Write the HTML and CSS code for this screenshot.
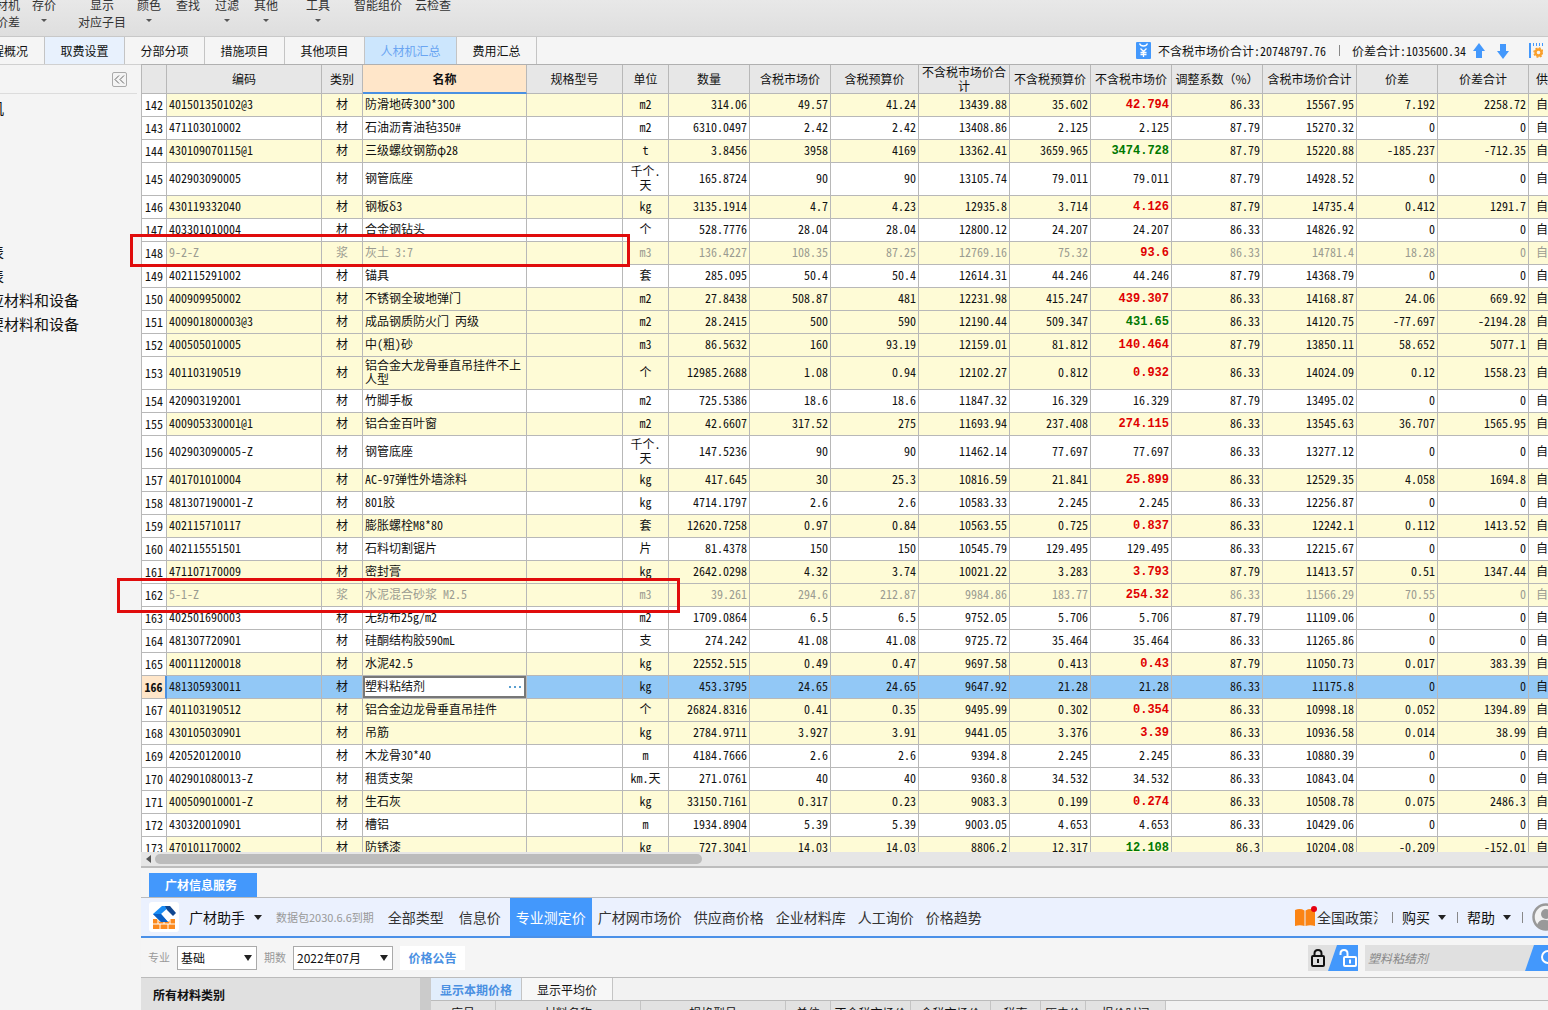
FILE: index.html
```html
<!DOCTYPE html>
<html lang="zh-CN">
<head>
<meta charset="utf-8">
<title>人材机汇总</title>
<link rel="stylesheet" href="styles.css">
</head>
<body>
<header class="toolbar">
  <div class="tools tools-cut"><button>材机<br>价差</button></div>
  <div class="tools"><button>存价<i class="caret"></i></button></div>
  <div class="tools">
    <button class="wide">显示<br>对应子目</button>
    <button>颜色<i class="caret"></i></button>
    <button>查找</button>
    <button>过滤<i class="caret"></i></button>
    <button>其他<i class="caret"></i></button>
  </div>
  <div class="tools"><button>工具<i class="caret"></i></button></div>
  <div class="tools"><button class="wide">智能组价</button><button class="wide">云检查</button></div>
</header>
<nav class="tabs">
  <button class="tab first">程概况</button>
  <button class="tab hover">取费设置</button>
  <button class="tab">分部分项</button>
  <button class="tab">措施项目</button>
  <button class="tab">其他项目</button>
  <button class="tab active">人材机汇总</button>
  <button class="tab">费用汇总</button>
  <div class="totals">
    <svg class="yuan" width="15" height="17" viewBox="0 0 15 17"><rect width="15" height="17" rx="1" fill="#4398fc"/><path d="M3.500 1.500Q4.500 4 7.500 4T11.500 1.500M4.500 6.500L7.500 9.500 10.500 6.500M7.500 9.500V15M4.500 10.500H10.500M4.500 12.500H10.500" fill="none" stroke="#fff" stroke-width="1.300"/></svg>
    <span>不含税市场价合计:20748797.76</span>
    <i class="bar"></i>
    <span>价差合计:1035600.34</span>
    <svg class="arrow" width="12" height="16" viewBox="0 0 12 16"><path d="M6 0L12 8H9V15H3V8H0Z" fill="#4398fc"/></svg>
    <svg class="arrow-down" width="12" height="16" viewBox="0 0 12 16"><path d="M6 16L12 8H9V1H3V8H0Z" fill="#4398fc"/></svg>
    <svg class="settings" width="14" height="16" viewBox="0 0 14 16"><path d="M1 0V15" stroke="#4398fc" stroke-width="2"/><path d="M4.500 0V3M7.500 0V3M10.500 0V3M13.500 0V3" stroke="#4398fc"/><circle cx="9.500" cy="9.500" r="3" fill="none" stroke="#f9a02c" stroke-width="2.400"/><circle cx="9.500" cy="9.500" r="4.500" fill="none" stroke="#f9a02c" stroke-width="1.400" stroke-dasharray="2 1.500"/></svg>
  </div>
</nav>
<div class="workspace">
  <aside class="sidebar">
    <div class="side-head"><button class="collapse" aria-label="收起"><svg width="11" height="9" viewBox="0 0 11 9"><path d="M5 .5L1 4.500 5 8.500M10 .5L6 4.500 10 8.500" fill="none" stroke="#666"/></svg></button></div>
    <ul class="side-list"><li class="lead">机</li><li>表</li><li>表</li><li>应材料和设备</li><li>要材料和设备</li></ul>
  </aside>
  <main class="main">
    <div class="grid">
<table class="data">
<colgroup><col class="c25"><col class="c155"><col class="c41"><col class="c164"><col class="c96"><col class="c46"><col class="c81"><col class="c81"><col class="c88"><col class="c91"><col class="c81"><col class="c81"><col class="c91"><col class="c94"><col class="c81"><col class="c91"><col class="c81"></colgroup>
<thead><tr><th></th><th>编码</th><th>类别</th><th class="sorted">名称</th><th>规格型号</th><th>单位</th><th>数量</th><th>含税市场价</th><th>含税预算价</th><th>不含税市场价合计</th><th>不含税预算价</th><th>不含税市场价</th><th>调整系数（%）</th><th>含税市场价合计</th><th>价差</th><th>价差合计</th><th>供</th></tr></thead>
<tbody>
<tr class="y"><td>142<td>401501350102@3<td>材<td>防滑地砖300*300<td><td>m2<td>314.06<td>49.57<td>41.24<td>13439.88<td>35.602<td class="up">42.794<td>86.33<td>15567.95<td>7.192<td>2258.72<td>自
<tr><td>143<td>471103010002<td>材<td>石油沥青油毡350#<td><td>m2<td>6310.0497<td>2.42<td>2.42<td>13408.86<td>2.125<td>2.125<td>87.79<td>15270.32<td>0<td>0<td>自
<tr class="y"><td>144<td>430109070115@1<td>材<td>三级螺纹钢筋φ28<td><td>t<td>3.8456<td>3958<td>4169<td>13362.41<td>3659.965<td class="down">3474.728<td>87.79<td>15220.88<td>-185.237<td>-712.35<td>自
<tr class="tall"><td>145<td>402903090005<td>材<td>钢管底座<td><td>千个.天<td>165.8724<td>90<td>90<td>13105.74<td>79.011<td>79.011<td>87.79<td>14928.52<td>0<td>0<td>自
<tr class="y"><td>146<td>430119332040<td>材<td>钢板δ3<td><td>kg<td>3135.1914<td>4.7<td>4.23<td>12935.8<td>3.714<td class="up">4.126<td>87.79<td>14735.4<td>0.412<td>1291.7<td>自
<tr><td>147<td>403301010004<td>材<td>合金钢钻头<td><td>个<td>528.7776<td>28.04<td>28.04<td>12800.12<td>24.207<td>24.207<td>86.33<td>14826.92<td>0<td>0<td>自
<tr class="y dim"><td>148<td>9-2-Z<td>浆<td>灰土 3:7<td><td>m3<td>136.4227<td>108.35<td>87.25<td>12769.16<td>75.32<td class="up">93.6<td>86.33<td>14781.4<td>18.28<td>0<td>自
<tr><td>149<td>402115291002<td>材<td>锚具<td><td>套<td>285.095<td>50.4<td>50.4<td>12614.31<td>44.246<td>44.246<td>87.79<td>14368.79<td>0<td>0<td>自
<tr class="y"><td>150<td>400909950002<td>材<td>不锈钢全玻地弹门<td><td>m2<td>27.8438<td>508.87<td>481<td>12231.98<td>415.247<td class="up">439.307<td>86.33<td>14168.87<td>24.06<td>669.92<td>自
<tr class="y"><td>151<td>400901800003@3<td>材<td>成品钢质防火门 丙级<td><td>m2<td>28.2415<td>500<td>590<td>12190.44<td>509.347<td class="down">431.65<td>86.33<td>14120.75<td>-77.697<td>-2194.28<td>自
<tr class="y"><td>152<td>400505010005<td>材<td>中(粗)砂<td><td>m3<td>86.5632<td>160<td>93.19<td>12159.01<td>81.812<td class="up">140.464<td>87.79<td>13850.11<td>58.652<td>5077.1<td>自
<tr class="y tall"><td>153<td>401103190519<td>材<td>铝合金大龙骨垂直吊挂件不上人型<td><td>个<td>12985.2688<td>1.08<td>0.94<td>12102.27<td>0.812<td class="up">0.932<td>86.33<td>14024.09<td>0.12<td>1558.23<td>自
<tr><td>154<td>420903192001<td>材<td>竹脚手板<td><td>m2<td>725.5386<td>18.6<td>18.6<td>11847.32<td>16.329<td>16.329<td>87.79<td>13495.02<td>0<td>0<td>自
<tr class="y"><td>155<td>400905330001@1<td>材<td>铝合金百叶窗<td><td>m2<td>42.6607<td>317.52<td>275<td>11693.94<td>237.408<td class="up">274.115<td>86.33<td>13545.63<td>36.707<td>1565.95<td>自
<tr class="tall"><td>156<td>402903090005-Z<td>材<td>钢管底座<td><td>千个.天<td>147.5236<td>90<td>90<td>11462.14<td>77.697<td>77.697<td>86.33<td>13277.12<td>0<td>0<td>自
<tr class="y"><td>157<td>401701010004<td>材<td>AC-97弹性外墙涂料<td><td>kg<td>417.645<td>30<td>25.3<td>10816.59<td>21.841<td class="up">25.899<td>86.33<td>12529.35<td>4.058<td>1694.8<td>自
<tr><td>158<td>481307190001-Z<td>材<td>801胶<td><td>kg<td>4714.1797<td>2.6<td>2.6<td>10583.33<td>2.245<td>2.245<td>86.33<td>12256.87<td>0<td>0<td>自
<tr class="y"><td>159<td>402115710117<td>材<td>膨胀螺栓M8*80<td><td>套<td>12620.7258<td>0.97<td>0.84<td>10563.55<td>0.725<td class="up">0.837<td>86.33<td>12242.1<td>0.112<td>1413.52<td>自
<tr><td>160<td>402115551501<td>材<td>石料切割锯片<td><td>片<td>81.4378<td>150<td>150<td>10545.79<td>129.495<td>129.495<td>86.33<td>12215.67<td>0<td>0<td>自
<tr class="y"><td>161<td>471107170009<td>材<td>密封膏<td><td>kg<td>2642.0298<td>4.32<td>3.74<td>10021.22<td>3.283<td class="up">3.793<td>87.79<td>11413.57<td>0.51<td>1347.44<td>自
<tr class="y dim"><td>162<td>5-1-Z<td>浆<td>水泥混合砂浆 M2.5<td><td>m3<td>39.261<td>294.6<td>212.87<td>9984.86<td>183.77<td class="up">254.32<td>86.33<td>11566.29<td>70.55<td>0<td>自
<tr><td>163<td>402501690003<td>材<td>无纺布25g/m2<td><td>m2<td>1709.0864<td>6.5<td>6.5<td>9752.05<td>5.706<td>5.706<td>87.79<td>11109.06<td>0<td>0<td>自
<tr><td>164<td>481307720901<td>材<td>硅酮结构胶590mL<td><td>支<td>274.242<td>41.08<td>41.08<td>9725.72<td>35.464<td>35.464<td>86.33<td>11265.86<td>0<td>0<td>自
<tr class="y"><td>165<td>400111200018<td>材<td>水泥42.5<td><td>kg<td>22552.515<td>0.49<td>0.47<td>9697.58<td>0.413<td class="up">0.43<td>87.79<td>11050.73<td>0.017<td>383.39<td>自
<tr class="selected"><td>166<td>481305930011<td>材<td class="edit"><div class="editor"><input type="text" value="塑料粘结剂" aria-label="名称"><button aria-label="更多"><svg width="12" height="2" viewBox="0 0 12 2"><path d="M0 0H2V2H0ZM5 0H7V2H5ZM10 0H12V2H10Z" fill="#5a9fd0"/></svg></button></div><td><td>kg<td>453.3795<td>24.65<td>24.65<td>9647.92<td>21.28<td>21.28<td>86.33<td>11175.8<td>0<td>0<td>自
<tr class="y"><td>167<td>401103190512<td>材<td>铝合金边龙骨垂直吊挂件<td><td>个<td>26824.8316<td>0.41<td>0.35<td>9495.99<td>0.302<td class="up">0.354<td>86.33<td>10998.18<td>0.052<td>1394.89<td>自
<tr class="y"><td>168<td>430105030901<td>材<td>吊筋<td><td>kg<td>2784.9711<td>3.927<td>3.91<td>9441.05<td>3.376<td class="up">3.39<td>86.33<td>10936.58<td>0.014<td>38.99<td>自
<tr><td>169<td>420520120010<td>材<td>木龙骨30*40<td><td>m<td>4184.7666<td>2.6<td>2.6<td>9394.8<td>2.245<td>2.245<td>86.33<td>10880.39<td>0<td>0<td>自
<tr><td>170<td>402901080013-Z<td>材<td>租赁支架<td><td>km.天<td>271.0761<td>40<td>40<td>9360.8<td>34.532<td>34.532<td>86.33<td>10843.04<td>0<td>0<td>自
<tr class="y"><td>171<td>400509010001-Z<td>材<td>生石灰<td><td>kg<td>33150.7161<td>0.317<td>0.23<td>9083.3<td>0.199<td class="up">0.274<td>86.33<td>10508.78<td>0.075<td>2486.3<td>自
<tr><td>172<td>430320010901<td>材<td>槽铝<td><td>m<td>1934.8904<td>5.39<td>5.39<td>9003.05<td>4.653<td>4.653<td>86.33<td>10429.06<td>0<td>0<td>自
<tr class="y"><td>173<td>470101170002<td>材<td>防锈漆<td><td>kg<td>727.3041<td>14.03<td>14.03<td>8806.2<td>12.317<td class="down">12.108<td>86.3<td>10204.08<td>-0.209<td>-152.01<td>自
</tbody>
</table>
    </div>
    <div class="scrollbar"><i class="scroll-left"></i><i class="thumb"></i></div>
    <section class="service">
      <div class="service-tabs"><button>广材信息服务</button></div>
      <div class="service-head">
        <svg class="logo" width="30" height="30" viewBox="0 0 30 30"><rect width="30" height="30" rx="3" fill="#fff"/><path d="M4 17H8L11 20H19L22 17H26V27H4Z" fill="#fb8a1e"/><path d="M4 22H26M9 17V22M15 20V22M21 18V22M11 22V27M19 22V27" stroke="#fff"/><path d="M13 4H21L12 12 19 20H12L4 12Z" fill="#1a8cf4"/><path d="M4 12H12L19 20H12Z" fill="#0b5fc4"/><path d="M16 4H21L27 11 24 14 18 8Z" fill="#12478f"/></svg>
        <button class="brand">广材助手<i class="tri"></i></button>
        <span class="expiry">数据包2030.6.6到期</span>
        <nav class="kinds">
          <div class="kinds-main"><button>全部类型</button><button>信息价</button><button class="on">专业测定价</button></div>
          <button>广材网市场价</button><button>供应商价格</button><button>企业材料库</button><button>人工询价</button><button>价格趋势</button>
        </nav>
        <div class="account">
          <svg width="22" height="22" viewBox="0 0 22 22"><path d="M0 4Q5 2 9.500 4.500V20Q5 18.500 0 20ZM10.500 4.500Q15 2 20 4V20Q15 18.500 10.500 20Z" fill="#fb8414"/><circle cx="19" cy="3" r="3" fill="#e60012"/></svg>
          <a href="#" class="policy">全国政策法</a>
          <i class="bar"></i><button>购买<i class="tri"></i></button>
          <i class="bar"></i><button>帮助<i class="tri"></i></button>
          <i class="bar"></i>
          <svg class="avatar" width="28" height="28" viewBox="0 0 28 28"><circle cx="14" cy="14" r="12.500" fill="#f2f2f2" stroke="#999" stroke-width="2.500"/><circle cx="14" cy="11" r="5" fill="#999"/><path d="M5 22Q7 16 14 17T23 22Q14 30 5 22Z" fill="#999"/></svg>
        </div>
      </div>
      <div class="filters">
        <label for="major">专业</label>
        <span class="select w80"><select id="major"><option>基础</option></select></span>
        <label for="period">期数</label>
        <span class="select w100"><select id="period"><option>2022年07月</option></select></span>
        <button class="notice">价格公告</button>
        <div class="search">
          <svg width="50" height="26" viewBox="0 0 50 26"><path d="M0 0H50V26H0Z" fill="#e0e0e0"/><path d="M29 0H50V26H20Z" fill="#4398fc"/><rect x="4" y="11" width="12" height="10" rx="1" fill="none" stroke="#111" stroke-width="2"/><path d="M6.500 11V8.500Q6.500 5 10 5T13.500 8.500V11M10 14V18" fill="none" stroke="#111" stroke-width="2"/><rect x="36" y="12" width="12" height="9" rx="1" fill="none" stroke="#fff" stroke-width="2"/><path d="M39.500 12V8.500Q39.500 5 36 5T32.500 8.500V10M42 14.500V18.500" fill="none" stroke="#fff" stroke-width="2"/></svg>
          <input type="text" placeholder="塑料粘结剂" aria-label="搜索">
          <button class="go" aria-label="查询"><svg width="40" height="26" viewBox="0 0 40 26"><path d="M9 0H40V26H0Z" fill="#4398fc"/><circle cx="23" cy="12" r="6" fill="none" stroke="#fff" stroke-width="2"/><path d="M27 17L32 22" stroke="#fff" stroke-width="2"/></svg></button>
        </div>
      </div>
      <div class="lower">
        <div class="category">所有材料类别</div>
        <div class="prices">
          <div class="price-tabs"><button class="on">显示本期价格</button><button>显示平均价</button></div>
          <table class="price-table">
            <colgroup><col class="c65"><col class="c145"><col class="c145"><col class="c45"><col class="c80"><col class="c80"><col class="c50"><col class="c45"><col class="c80"></colgroup>
            <tr><th>序号</th><th>材料名称</th><th>规格型号</th><th>单位</th><th>不含税市场价</th><th>含税市场价</th><th>税率</th><th>历史价</th><th>报价时间</th></tr>
          </table>
        </div>
      </div>
    </section>
  </main>
</div>
<div class="mark mark-lime"></div>
<div class="mark mark-mortar"></div>
</body>
</html>
```

FILE: styles.css
```css
* { box-sizing: border-box; }
body {
  margin: 0; height: 100vh; overflow: hidden; position: relative;
  display: flex; flex-direction: column;
  font: 12px/17px "Noto Sans CJK SC", sans-serif; color: #111; background: #f5f5f5;
}
button { font: inherit; color: inherit; background: none; border: 0; padding: 0; white-space: nowrap; }
input, select { font: inherit; color: inherit; border-radius: 0; }
svg { display: block; flex: none; }

/* Top toolbar */
.toolbar {
  flex: none; height: 36px; overflow: hidden; display: flex; align-items: flex-end;
  gap: 16px; padding-bottom: 6px; color: #333;
  background: linear-gradient(#e8e8e8, #dedede);
}
.tools { display: flex; gap: 3px; }
.tools button { width: 36px; height: 34px; display: flex; flex-direction: column; align-items: center; line-height: 17px; }
.tools button.wide { width: 52px; }
.tools button:has(br) { display: block; }
.tools-cut { margin-left: -4px; margin-right: -2px; }
.tools-cut button { width: 24px; }
.tools-cut + .tools { margin-right: -2px; margin-left: -8px; }
.caret { border: 3px solid transparent; border-top-color: #555; border-bottom: 0; margin-top: 6px; }

/* Page tabs */
.tabs { flex: none; height: 28px; display: flex; border-top: 1px solid #c8c8c8; background: #f5f5f5; overflow: hidden; }
.tab { flex: none; width: 80px; border-right: 1px solid #c4c4c4; }
.tab.first { width: 45px; text-align: right; padding-right: 16px; direction: rtl; overflow: hidden; }
.tab.hover { background: #e8f1fd; }
.tab.active { width: 92px; background: #cce6fd; color: #6aa5f2; }
.totals { flex: none; margin-left: auto; margin-right: 5px; display: flex; align-items: center; font-feature-settings: "hwid"; }
.yuan { margin-right: 7px; }
.bar { flex: none; width: 1px; height: 11px; background: #888; }
.totals .bar { margin: 0 12px 0 13px; }
.arrow { margin: 0 12px 0 7px; }
.settings { margin-left: 20px; }

.workspace { flex: 1; min-height: 0; display: flex; }

/* Sidebar */
.sidebar { flex: none; width: 141px; overflow: hidden; background: #f4f4f4; border-top: 1px solid #d0d0d0; }
.side-head { height: 29px; width: 137px; border-bottom: 1px solid #dcdcdc; display: flex; justify-content: flex-end; align-items: center; padding-right: 10px; }
.collapse { width: 15px; height: 15px; border: 1px solid #aaa; border-radius: 2px; display: flex; align-items: center; justify-content: center; }
.side-list { list-style: none; margin: 2px 0 0 -11px; padding: 0; font-size: 15px; line-height: 24px; }
.side-list .lead { margin-bottom: 120px; }

.main { flex: 1; min-width: 0; display: flex; flex-direction: column; }

/* Materials grid */
.grid { flex: 1; min-height: 0; overflow: hidden; background: #fff; border-top: 1px solid #b0b0b0; border-left: 1px solid #b8b8b8; }
.data { table-layout: fixed; width: 1463px; border-collapse: separate; border-spacing: 0; line-height: 14px; font-feature-settings: "hwid"; }
.c25 { width: 25px; } .c41 { width: 41px; } .c45 { width: 45px; } .c46 { width: 46px; }
.c50 { width: 50px; } .c65 { width: 65px; } .c80 { width: 80px; } .c81 { width: 81px; }
.c88 { width: 88px; } .c91 { width: 91px; } .c94 { width: 94px; } .c96 { width: 96px; }
.c145 { width: 145px; } .c155 { width: 155px; } .c164 { width: 164px; }
.data th, .data td { padding: 0 2px; border-right: 1px solid #b8b8b8; border-bottom: 1px solid #b8b8b8; }
.data th { height: 29px; background: #e7e7e7; font-weight: 400; font-feature-settings: normal; white-space: normal; }
.data th.sorted { background: #ffe6c9; font-weight: 700; border-bottom: 2px solid #4a90e2; }
.data td { height: 23px; padding-bottom: 2px; text-align: right; }
.data .tall td { height: 33px; }
.data td:nth-child(1), .data td:nth-child(3), .data td:nth-child(6) { text-align: center; }
.data td:nth-child(1) { padding-bottom: 0; }
.data td:nth-child(2), .data td:nth-child(4) { text-align: left; }
.data td:nth-child(6) { padding-left: 3px; padding-right: 3px; }
.data td:nth-child(17), .data th:nth-child(17) { text-align: left; padding-left: 7px; }
.y td { background: #fefbd6; }
.y td:first-child { background: #fff; }
.dim td:not(:first-child) { color: #9b9b91; }
.data td.up, .data td.down { padding-bottom: 0; font: bold 12px/14px "Liberation Mono", monospace; color: #e00000; }
.data td.down { color: #007800; }
.selected td { background: #92c8f6; }
.data .selected td:first-child { background: #ffe6c9; font-weight: 700; border-right: 2px solid #4a90e2; padding: 0; }
.data .selected .edit { padding: 0; }
.editor { display: flex; height: 22px; background: #fff; border: 2px solid #777; }
.editor input { flex: 1; min-width: 0; border: 0; padding: 0 0 2px; background: none; }
.editor button { padding: 0 3px; }

.scrollbar { flex: none; height: 16px; background: #e6e6e6; border-bottom: 2px solid #bdbdbd; display: flex; align-items: center; padding-left: 5px; }
.scroll-left { border: 4px solid transparent; border-right: 5px solid #555; border-left: 0; }
.thumb { width: 39%; height: 10px; border-radius: 5px; background: #bcbcbc; margin-left: 4px; }

/* Price service panel */
.service { flex: none; height: 142px; overflow: hidden; display: flex; flex-direction: column; }
.service-tabs { flex: none; height: 30px; padding: 5px 8px 0; border-bottom: 1px solid #bbb; display: flex; }
.service-tabs button { width: 108px; padding: 0 4px 2px 0; background: #4398fc; color: #fff; font-weight: 700; }
.service-head { flex: none; height: 40px; display: flex; align-items: center; background: #ebf1fe; border-bottom: 2px solid #4a90e8; padding-left: 8px; font-size: 14px; }
.brand { margin-left: 10px; display: flex; align-items: center; }
.tri { border: 4px solid transparent; border-top: 5px solid #222; border-bottom: 0; margin-left: 9px; }
.expiry { margin-left: 14px; font-size: 11px; color: #999; white-space: nowrap; }
.kinds { margin-left: 8px; display: flex; align-self: stretch; color: #333; }
.kinds button { padding: 0 6px; }
.kinds-main { display: flex; gap: 3px; }
.kinds .on { background: #4398fc; color: #fff; }
.account { flex: none; margin-left: auto; margin-right: -12px; display: flex; align-items: center; }
.policy { color: #333; text-decoration: none; width: 61px; overflow: hidden; white-space: nowrap; }
.account .bar { margin: 0 9px 0 10px; }
.account .policy + .bar { margin-left: 14px; }
.account button { display: flex; align-items: center; }
.account button .tri { margin-left: 8px; }
.account button + .bar { margin-left: 11px; }

.filters { flex: none; height: 40px; display: flex; align-items: center; border-bottom: 1px solid #bbb; padding-left: 7px; }
.filters label { font-size: 11px; color: #999; }
.select { position: relative; margin: 0 7px; }
.select::after { content: ""; position: absolute; right: 5px; top: 9px; border: 4px solid transparent; border-top: 6px solid #222; border-bottom: 0; pointer-events: none; }
.select select { appearance: none; width: 100%; height: 24px; padding: 0 3px; border: 1px solid #aaa; background: #fff; display: block; }
.w80 { width: 80px; }
.w100 { width: 100px; }
.notice { width: 65px; height: 24px; background: #fff; color: #4a90e2; font-weight: 700; }
.search { flex: none; margin-left: auto; margin-right: -17px; display: flex; }
.search input { margin-left: 7px; width: 160px; height: 26px; border: 0; padding: 0 3px; background: #e0e0e0; font-style: italic; }
.search input::placeholder { color: #888; }
.go { background: linear-gradient(90deg, #e0e0e0 50%, #4398fc 50%); }

.lower { flex: 1; min-height: 0; display: flex; }
.category { flex: none; width: 290px; padding: 8px 12px; background: #e0e0e0; font-weight: 700; border-right: 11px solid #cbcbcb; }
.prices { flex: 1; min-width: 0; background: #f2f2f2; }
.price-tabs { height: 23px; display: flex; border-bottom: 1px solid #bbb; }
.price-tabs button { width: 91px; border-right: 1px solid #c4c4c4; background: #f7f7f7; }
.price-tabs .on { background: #e2eefc; color: #4a90e2; font-weight: 700; }
.price-table { table-layout: fixed; width: 735px; border-spacing: 0; }
.price-table th { height: 22px; padding: 0; font-weight: 400; background: #e2e2e2; border-right: 1px solid #c4c4c4; white-space: nowrap; }

/* Red review marks laid over the grid */
.mark { position: absolute; border: 3px solid #e00c0c; pointer-events: none; }
.mark-lime { left: 130px; top: 234px; width: 500px; height: 33px; }
.mark-mortar { left: 117px; top: 578px; width: 563px; height: 35px; }
```
